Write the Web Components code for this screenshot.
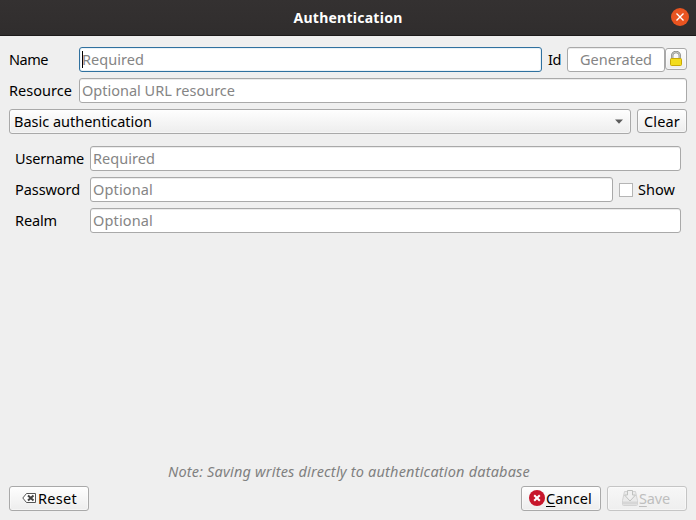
<!DOCTYPE html>
<html lang="en"><head><meta charset="utf-8"><title>Authentication</title>
<style>html,body{margin:0;width:696px;height:520px;overflow:hidden;background:#efefef}</style></head>
<body><auth-dialog></auth-dialog>
<script>
// Text run whose tracking is adjusted to fill a given advance width.
customElements.define('fit-text', class extends HTMLElement {
  connectedCallback() {
    const root = this.attachShadow({mode: 'open'});
    root.innerHTML = `<style>:host{display:inline-block;white-space:pre;flex:none}span{display:inline-block}
      ::slotted(u){text-decoration-thickness:1px;text-underline-offset:2px;text-decoration-skip-ink:none}</style><span><slot></slot></span>`;
    const span = root.querySelector('span'), w = +this.getAttribute('w');
    const natural = span.getBoundingClientRect().width;
    this.style.width = w + 'px';
    span.style.letterSpacing = (w - natural) / this.textContent.length + 'px';
  }
});
customElements.define('line-field', class extends HTMLElement {
  connectedCallback() {
    this.attachShadow({mode: 'open'}).innerHTML = `<style>
      :host{display:flex;box-sizing:border-box;height:25px;align-items:center;background:#fff;border:1px solid #a9a9a9;border-radius:3px;padding:0 2px;color:#858585;box-shadow:inset 0 1px #ececec}
      :host([focused]){border-color:#30719f;box-shadow:inset 0 0 0 1px #eaf2f7}
      :host([centered]){justify-content:center}
      i{display:none;width:1px;height:17px;background:#000;margin-right:-1px}
      :host([focused]) i{display:block}</style><i></i><slot></slot>`;
  }
});
customElements.define('push-button', class extends HTMLElement {
  connectedCallback() {
    this.attachShadow({mode: 'open'}).innerHTML = `<style>
      :host{display:flex;box-sizing:border-box;height:25px;align-items:center;justify-content:center;background:linear-gradient(#fefefe,#ededed);border:1px solid #a9a9a9;border-radius:3px;box-shadow:inset 0 0 0 1px #ffffff70}
      :host([disabled]){color:#bebebe;border-color:#c5c5c5;background:linear-gradient(#f7f7f7,#eee)}</style><slot></slot>`;
  }
});
customElements.define('title-bar', class extends HTMLElement {
  connectedCallback() {
    this.attachShadow({mode: 'open'}).innerHTML = `<style>
      :host{display:grid;grid-template-columns:1fr auto 1fr;height:36px;box-sizing:border-box;align-items:center;background:linear-gradient(#343131,#302d2d);border-bottom:1px solid #1d1b1b;color:#fff;font-weight:700;font-size:14px;line-height:20px}
      svg{grid-column:3;justify-self:end;margin:0 7px 2px 0}
      div{grid-column:2}</style><div><slot></slot></div>
      <svg width="18" height="18" viewBox="0 0 18 18"><circle cx="9" cy="9" r="9" fill="#e95420"/><path d="M5.500 5.500l7 7m0-7l-7 7" stroke="#fff" stroke-width="1.350"/></svg>`;
  }
});
customElements.define('auth-dialog', class extends HTMLElement {
  connectedCallback() {
    this.attachShadow({mode: 'open'}).innerHTML = `<style>
      :host{display:flex;flex-direction:column;width:696px;height:520px;background:#efefef;color:#000;font:14.5px/20px "Noto Sans","Open Sans",sans-serif}
      main{flex:1;display:flex;flex-direction:column;padding:11px 9px 9px;box-sizing:border-box}
      main fit-text{padding-bottom:2px}
      .row{display:flex;align-items:center;height:25px;margin-bottom:6px}
      .l{width:70px;display:flex}.g{flex:1}.sub{padding:0 6px;margin-top:6px}.sub .l{width:75px}
      .combo{width:622px;justify-content:space-between;padding:0 6px 0 4px}
      .clear{width:50px;height:24px;margin:0 0 1px 6px}
      .clear fit-text{padding-bottom:0}
      .id{width:98px}.lock{width:22px;height:22px;margin-bottom:1px}
      .check{width:14px;height:14px;box-sizing:border-box;border:1px solid #b5b5b5;background:#fff;margin:0 5px 0 6px}
      .note{margin-top:auto;display:flex;justify-content:center;height:20px;color:#808080;font-style:italic;margin-bottom:5px;padding-left:2px}
      .note fit-text{padding:0}
      .act{display:flex;gap:6px}.act push-button{width:80px;gap:1px}.act .sp{margin-right:auto}
      svg{flex:none;display:block}.act svg{margin-bottom:1px}</style>
    <title-bar><fit-text w="109">Authentication</fit-text></title-bar>
    <main>
      <div class="row"><div class="l"><fit-text w="39">Name</fit-text></div><line-field class="g" focused><fit-text w="62">Required</fit-text></line-field>
        <fit-text w="13" style="margin:0 6px">Id</fit-text><line-field class="id" centered><fit-text w="72">Generated</fit-text></line-field>
        <push-button class="lock"><svg width="14" height="16" viewBox="0 0 14 16"><path d="M3.2 8V4.8a3.8 3.8 0 017.6 0V8" fill="none" stroke="#888a85" stroke-width="2.4"/><path d="M3.2 8V4.8a3.8 3.8 0 017.6 0V8" fill="none" stroke="#d9dad7" stroke-width=".8"/><rect x="1.5" y="7.5" width="11" height="7" rx="1" fill="#f2dc1c" stroke="#c9a806"/></svg></push-button></div>
      <div class="row"><div class="l"><fit-text w="63">Resource</fit-text></div><line-field class="g"><fit-text w="153">Optional URL resource</fit-text></line-field></div>
      <div class="row"><push-button class="combo"><fit-text w="138">Basic authentication</fit-text><svg width="10" height="5" viewBox="0 0 10 5"><path d="M1 .5h8L5 4.700z" fill="#5c5c5c"/></svg></push-button><push-button class="clear"><fit-text w="36">Clear</fit-text></push-button></div>
      <div class="sub">
        <div class="row"><div class="l"><fit-text w="69">Username</fit-text></div><line-field class="g"><fit-text w="62">Required</fit-text></line-field></div>
        <div class="row"><div class="l"><fit-text w="65">Password</fit-text></div><line-field class="g"><fit-text w="60">Optional</fit-text></line-field><div class="check"></div><fit-text w="37" style="margin-right:6px">Show</fit-text></div>
        <div class="row"><div class="l"><fit-text w="42">Realm</fit-text></div><line-field class="g"><fit-text w="60">Optional</fit-text></line-field></div>
      </div>
      <div class="note"><fit-text w="362">Note: Saving writes directly to authentication database</fit-text></div>
      <div class="act">
        <push-button class="sp"><svg width="16" height="16" viewBox="0 0 16 16"><path d="M5.500 3.500h9v9h-9L1.800 8z" fill="#fff" stroke="#555"/><path d="M7 5.500l5.500 5M12.500 5.500L7 10.500" stroke="#444" stroke-width="2"/></svg><fit-text w="39">Reset</fit-text></push-button>
        <push-button style="padding-right:1px"><svg width="16" height="16" viewBox="0 0 16 16"><circle cx="8" cy="8" r="8" fill="#c7162b"/><path d="M5.200 5.200l5.600 5.600m0-5.600l-5.600 5.600" stroke="#fff" stroke-width="2"/></svg><fit-text w="46"><u>C</u>ancel</fit-text></push-button>
        <push-button disabled style="padding-right:2px"><svg width="16" height="16" viewBox="0 0 16 16"><path d="M2.500 1.500h11l2 9v4q0 1-1 1h-13q-1 0-1-1v-4z" fill="#eaeaea" stroke="#d3d3d3"/><path d="M1 11.500h14v3H1z" fill="#d6d6d6"/><path d="M5.500.5h5v4.500h3L8 11 2.500 5h3z" fill="#f0f0f0" stroke="#c0c2c0"/></svg><fit-text w="31"><u>S</u>ave</fit-text></push-button>
      </div>
    </main>`;
  }
});
</script></body></html>
